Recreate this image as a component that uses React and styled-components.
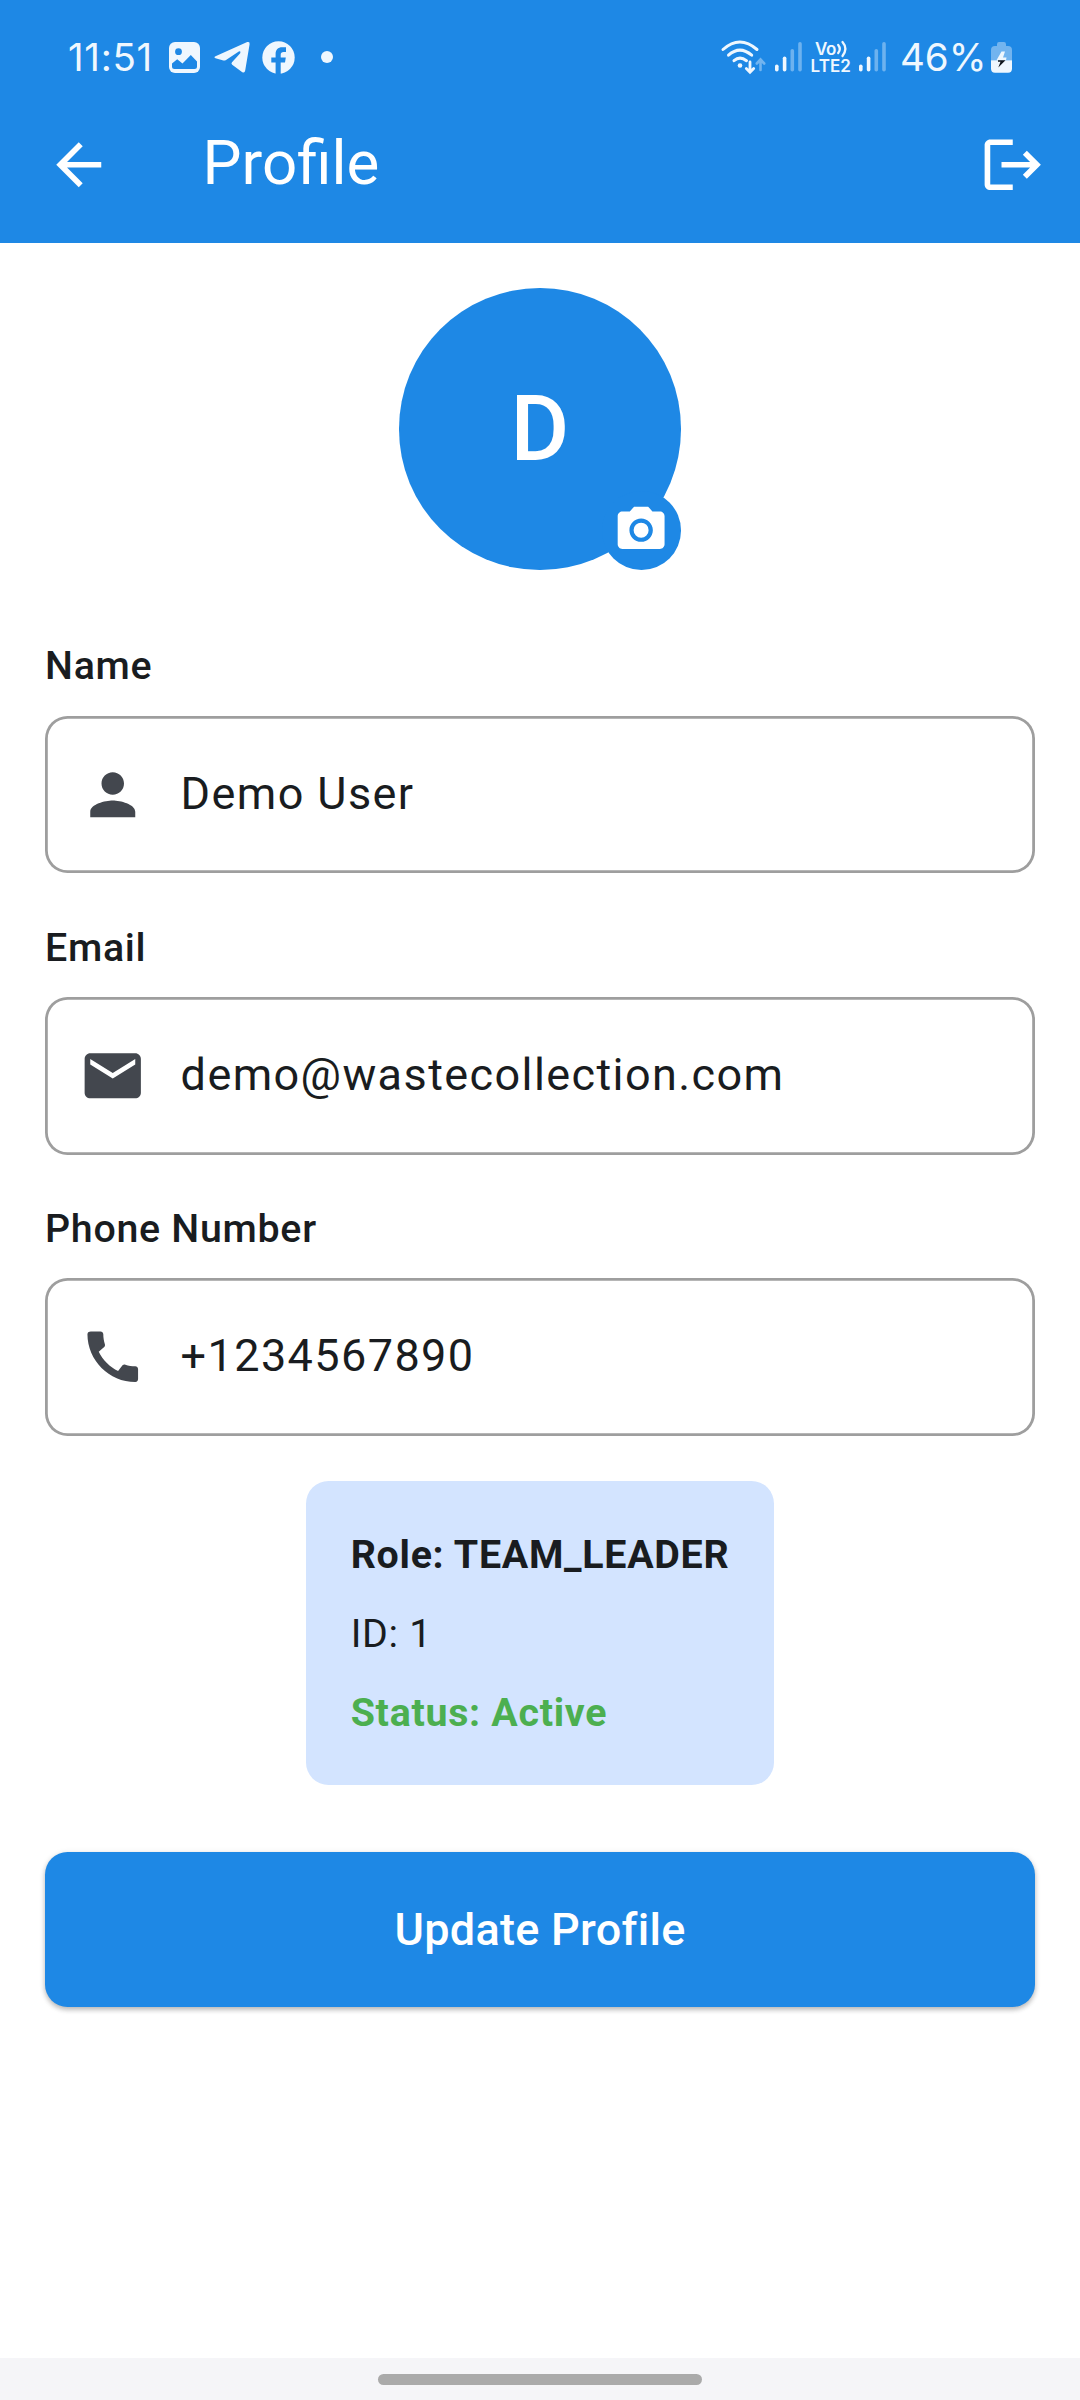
import React from "react";
import styled, { createGlobalStyle } from "styled-components";

const BLUE = "#1e88e5";
const INK = "#191c20";
const MUTED = "#43474e";
const STATUS = "#eff7fe";

const GlobalStyle = createGlobalStyle`
  html, body { margin: 0; padding: 0; background: #fff; }
  *, *::before, *::after { box-sizing: border-box; }
  body { font-family: Roboto, "Noto Sans", sans-serif; color: ${INK}; }
`;

const Screen = styled.div`
  width: 1080px;
  height: 2400px;
  display: flex;
  flex-direction: column;
  overflow: hidden;
`;

const Header = styled.header`
  height: 243.3px;
  background: ${BLUE};
  flex: none;
`;

const StatusBar = styled.div`
  height: 85.8px;
  padding: 28px 68px 0 68px;
  display: flex;
  justify-content: space-between;
  color: ${STATUS};
`;

const StatusGroup = styled.div`
  display: flex;
  align-items: center;
  height: 58px;
`;

const StatusText = styled.span`
  font-family: Inter, Roboto, sans-serif;
  font-size: 38.5px;
  line-height: 58px;
  font-weight: 400;
  white-space: nowrap;
  width: ${(p) => p.$width}px;
  padding-left: ${(p) => p.$inset || 0}px;
  letter-spacing: ${(p) => p.$track}px;
`;

const Glyph = styled.svg`
  display: block;
  flex: none;
  overflow: visible;
  margin-left: ${(p) => p.$gap || 0}px;
`;

const Volte = styled.div`
  display: flex;
  flex-direction: column;
  width: 40px;
  margin-left: 8.5px;
  margin-right: 0.5px;
  padding-top: 1px;
  font-family: Inter, Roboto, sans-serif;
  font-size: 17px;
  font-weight: 600;
  line-height: 17px;
`;

const VolteRow = styled.div`
  display: flex;
  align-items: center;
  height: 17px;
  white-space: nowrap;
  padding-left: ${(p) => p.$inset || 0}px;
  letter-spacing: ${(p) => p.$track || 0}px;
`;

const AppBar = styled.div`
  height: 157.5px;
  display: flex;
  align-items: center;
  padding: 0 33.75px 0 45px;
  color: #fff;
`;

const Title = styled.h1`
  flex: 1;
  margin: 0 0 2px 90px;
  font-size: 61.875px;
  line-height: 79px;
  font-weight: 400;
`;

const IconButton = styled.button`
  display: flex;
  padding: 0;
  border: 0;
  background: none;
  color: inherit;
`;

const Body = styled.main`
  flex: 1;
  display: flex;
  flex-direction: column;
  padding: 45px 45px 0;
`;

const Avatar = styled.div`
  position: relative;
  align-self: center;
  width: 281.25px;
  height: 281.25px;
  border-radius: 50%;
  background: ${BLUE};
  display: flex;
  align-items: center;
  justify-content: center;
  color: #fff;
  font-size: 90px;
  line-height: 129px;
  font-weight: 500;
  padding-top: 2px;
  margin-bottom: 67.5px;
`;

const CameraBadge = styled.button`
  position: absolute;
  right: 0;
  bottom: 0;
  display: flex;
  padding: 11.25px;
  border: 0;
  border-radius: 50%;
  background: ${BLUE};
  color: #fff;
`;

const Field = styled.label`
  display: flex;
  flex-direction: column;
  gap: 22.5px;
  margin-bottom: 45px;
`;

const FieldLabel = styled.span`
  height: 56.25px;
  padding-top: 1.4px;
  font-size: 39.375px;
  line-height: 56.25px;
  font-weight: 500;
  letter-spacing: 0.703px;
`;

const FieldBox = styled.span`
  height: 157.5px;
  border-radius: 22.5px;
  box-shadow: inset 0 0 0 2.8px #9e9e9e;
  display: flex;
  align-items: center;
  gap: 33.75px;
  padding: 0 33.75px;
  color: ${MUTED};
`;

const FieldValue = styled.span`
  color: ${INK};
  padding: 0 0 2px 0.6px;
  font-size: 45px;
  line-height: 67.5px;
  letter-spacing: 1.406px;
`;

const RoleCard = styled.section`
  align-self: center;
  display: flex;
  flex-direction: column;
  gap: 22.5px;
  padding: 46.4px 45px 43.6px;
  border-radius: 22.5px;
  background: #d3e4ff;
`;

const RoleLine = styled.span`
  font-size: 39.375px;
  line-height: 56.25px;
  letter-spacing: 0.703px;
  font-weight: ${(p) => (p.$bold ? 700 : 400)};
  color: ${(p) => (p.$active ? "#4caf50" : INK)};
`;

const UpdateButton = styled.button`
  margin: 67.5px 0 0;
  height: 154.7px;
  padding: 2px 0 0;
  border: 0;
  border-radius: 22.5px;
  background: ${BLUE};
  color: #fff;
  font: 500 45px/64px Roboto, "Noto Sans", sans-serif;
  letter-spacing: 0.281px;
  box-shadow: 0 3px 5px rgba(0, 0, 0, 0.22), 0 1px 6px rgba(0, 0, 0, 0.1);
`;

const NavBar = styled.footer`
  height: 42px;
  flex: none;
  background: #f5f5f8;
  display: flex;
  justify-content: center;
  padding-top: 16px;
`;

const NavHandle = styled.div`
  width: 324px;
  height: 11px;
  border-radius: 6px;
  background: #aaaaaa;
`;

const ICONS = {
  back: "M20 11H7.83l5.59-5.59L12 4l-8 8 8 8 1.41-1.41L7.83 13H20v-2z",
  logout:
    "M17 7l-1.41 1.41L18.17 11H8v2h10.17l-2.58 2.58L17 17l5-5zM4 5h8V3H4c-1.1 0-2 .9-2 2v14c0 1.1.9 2 2 2h8v-2H4V5z",
  camera:
    "M12 8.8a3.2 3.2 0 1 0 0 6.4 3.2 3.2 0 0 0 0-6.4zM9 2L7.17 4H4c-1.1 0-2 .9-2 2v12c0 1.1.9 2 2 2h16c1.1 0 2-.9 2-2V6c0-1.1-.9-2-2-2h-3.17L15 2H9zm3 15c-2.76 0-5-2.24-5-5s2.24-5 5-5 5 2.24 5 5-2.24 5-5 5z",
  person:
    "M12 12c2.21 0 4-1.79 4-4s-1.79-4-4-4-4 1.79-4 4 1.79 4 4 4zm0 2c-2.67 0-8 1.34-8 4v2h16v-2c0-2.66-5.33-4-8-4z",
  email:
    "M20 4H4c-1.1 0-1.99.9-1.99 2L2 18c0 1.1.9 2 2 2h16c1.1 0 2-.9 2-2V6c0-1.1-.9-2-2-2zm0 4l-8 5-8-5V6l8 5 8-5v2z",
  phone:
    "M20.01 15.38c-1.23 0-2.42-.2-3.53-.56-.35-.12-.74-.03-1.01.24l-1.57 1.97c-2.83-1.35-5.48-3.9-6.89-6.83l1.95-1.66c.27-.28.35-.67.24-1.02-.37-1.11-.56-2.3-.56-3.53 0-.54-.45-.99-.99-.99H4.19C3.65 3 3 3.24 3 3.99 3 13.28 10.73 21 20.01 21c.71 0 .99-.63.99-1.18v-3.45c0-.54-.45-.99-.99-.99z",
};

const Icon = ({ name, size = 67.5 }) => (
  <Glyph width={size} height={size} viewBox="0 0 24 24" fill="currentColor" aria-hidden="true">
    <path d={ICONS[name]} />
  </Glyph>
);

const GalleryIcon = () => (
  <Glyph $gap={19} width="31" height="31" viewBox="0 0 31 31">
    <rect width="31" height="31" rx="6" fill={STATUS} />
    <circle cx="9.5" cy="9.7" r="3.4" fill={BLUE} />
    <path
      d="M3 21.5L8.2 17.2L13.5 21.6L21.8 13L28 19.5V24.5Q28 27 25.5 27H5.5Q3 27 3 24.5Z"
      fill={BLUE}
    />
  </Glyph>
);

const TelegramIcon = () => (
  <Glyph $gap={13.5} width="36" height="32" viewBox="0 0 36 32">
    <path
      d="M1.5 15.2L33.2 1.1Q36 .2 35.6 3.2L31.2 29.5Q30.6 32.5 28 30.9L18.2 23.7Q16.8 22.5 18 21.2L26.2 12.2Q27.2 9.8 24.8 10.5L12 19Q10.5 20 8.5 19.3L1.5 17.2Q-.6 16.3 1.5 15.2Z"
      fill={STATUS}
    />
  </Glyph>
);

const FacebookIcon = () => (
  <Glyph $gap={12.5} width="33" height="33" viewBox="0 0 33 33">
    <circle cx="16.5" cy="16.5" r="16.2" fill={STATUS} />
    <path
      d="M13.6 33.5V21.5H9.3V16.5H13.6V13.2C13.6 8.7 16 6.3 20.2 6.3H24V10.9H21.6C19.7 10.9 18.7 11.8 18.7 13.7V16.5H23.8L23 21.5H18.7V33.5Z"
      fill={BLUE}
    />
  </Glyph>
);

const WifiIcon = () => (
  <Glyph width="46" height="34" viewBox="0 0 46 34" fill="none" stroke={STATUS} strokeLinecap="round">
    <path d="M2 9.5Q18.8-5.5 36 9.5" strokeWidth="3" />
    <path d="M7.5 15.2Q18.8 5 30.7 15.2" strokeWidth="3" />
    <path d="M13 20.7Q18.8 15.5 25.5 20.7" strokeWidth="3" />
    <circle cx="19" cy="25.5" r="2.3" fill={STATUS} stroke="none" />
    <path d="M29 22V32M25.3 28.5L29 32.2L32.7 28.5" strokeWidth="2.8" />
    <path d="M39.5 30V20M35.8 23.5L39.5 19.5L43.2 23.5" strokeWidth="2.6" opacity=".4" />
  </Glyph>
);

const SignalIcon = ({ gap }) => (
  <Glyph $gap={gap} width="27" height="30" viewBox="0 0 27 30" fill={STATUS}>
    <rect x="0" y="22.5" width="3.6" height="7" rx="1.8" />
    <rect x="7.8" y="14.5" width="3.6" height="15" rx="1.8" />
    <rect x="15.5" y="7" width="3.6" height="22.5" rx="1.8" opacity=".38" />
    <rect x="23.2" y="0" width="3.6" height="29.5" rx="1.8" opacity=".38" />
  </Glyph>
);

const VoiceWaves = () => (
  <Glyph width="12" height="16" viewBox="0 0 12 16" fill="none" stroke={STATUS} strokeWidth="2.3" strokeLinecap="round">
    <path d="M2.2 4Q5.4 8 2.2 12" />
    <path d="M6.5 1Q12.2 7.5 6.5 15" />
  </Glyph>
);

const BatteryIcon = () => (
  <Glyph $gap={7} width="21" height="31" viewBox="0 0 21 31">
    <path d="M6 4V2.2Q6 0 8 0H13Q15 0 15 2.2V4H17Q21 4 21 8V18.3H0V8Q0 4 4 4Z" fill={STATUS} opacity=".4" />
    <path d="M0 18.3H21V26.5Q21 30.7 17 30.7H4Q0 30.7 0 26.5Z" fill={STATUS} />
    <path d="M10.5 9.5L5.5 18.3H15L15.5 15.5H12L14 9.5Z" fill={STATUS} />
    <path d="M7 18.3H14.5L7.3 25.5L9.5 19.8H7Z" fill="#10161d" />
  </Glyph>
);

const FIELDS = [
  { label: "Name", icon: "person", value: "Demo User" },
  { label: "Email", icon: "email", value: "demo@wastecollection.com" },
  { label: "Phone Number", icon: "phone", value: "+1234567890" },
];

export default function App() {
  return (
    <Screen>
      <GlobalStyle />
      <Header>
        <StatusBar>
          <StatusGroup>
            <StatusText $width={82} $track={0.7}>11:51</StatusText>
            <GalleryIcon />
            <TelegramIcon />
            <FacebookIcon />
            <Glyph $gap={26} width="12" height="12" viewBox="0 0 12 12">
              <circle cx="6" cy="6" r="6" fill={STATUS} />
            </Glyph>
          </StatusGroup>
          <StatusGroup>
            <WifiIcon />
            <SignalIcon gap={8} />
            <Volte>
              <VolteRow $inset={4.5} $track={-0.5}>
                Vo
                <VoiceWaves />
              </VolteRow>
              <VolteRow $track={0.1}>LTE2</VolteRow>
            </Volte>
            <SignalIcon gap={8} />
            <StatusText $width={98} $inset={14} $track={0}>46%</StatusText>
            <BatteryIcon />
          </StatusGroup>
        </StatusBar>
        <AppBar>
          <IconButton aria-label="Back">
            <Icon name="back" />
          </IconButton>
          <Title>Profile</Title>
          <IconButton aria-label="Log out">
            <Icon name="logout" />
          </IconButton>
        </AppBar>
      </Header>
      <Body>
        <Avatar>
          D
          <CameraBadge aria-label="Change photo">
            <Icon name="camera" size={56.25} />
          </CameraBadge>
        </Avatar>
        {FIELDS.map((f) => (
          <Field key={f.label}>
            <FieldLabel>{f.label}</FieldLabel>
            <FieldBox>
              <Icon name={f.icon} />
              <FieldValue>{f.value}</FieldValue>
            </FieldBox>
          </Field>
        ))}
        <RoleCard>
          <RoleLine $bold>Role: TEAM_LEADER</RoleLine>
          <RoleLine>ID: 1</RoleLine>
          <RoleLine $bold $active>Status: Active</RoleLine>
        </RoleCard>
        <UpdateButton>Update Profile</UpdateButton>
      </Body>
      <NavBar>
        <NavHandle />
      </NavBar>
    </Screen>
  );
}
